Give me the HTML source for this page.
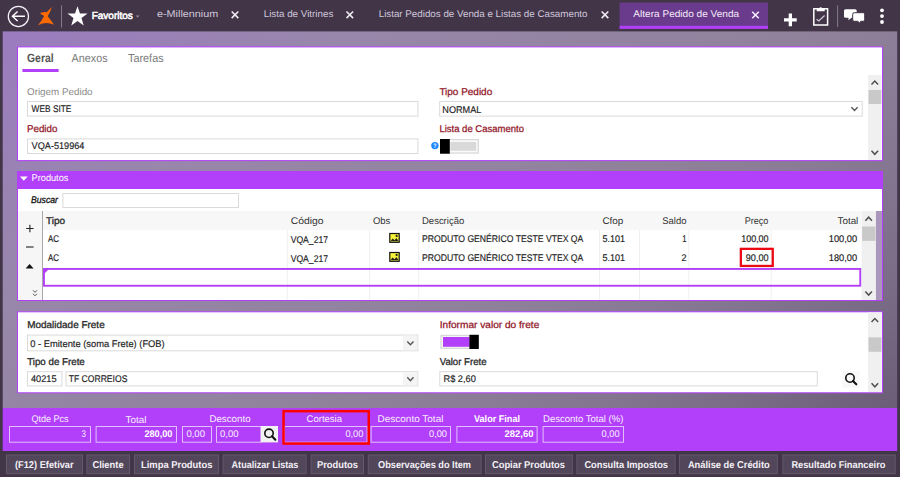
<!DOCTYPE html>
<html lang="pt-BR"><head><meta charset="utf-8"><title>Altera Pedido de Venda</title>
<style>
html,body{margin:0;padding:0;background:#423548;overflow:hidden}
svg{display:block;font-family:"Liberation Sans", sans-serif;text-rendering:geometricPrecision}
</style></head><body>
<svg width="900" height="477" viewBox="0 0 900 477">
<defs><linearGradient id="bg" gradientUnits="userSpaceOnUse" x1="3" y1="31.5" x2="517.05" y2="699.8"><stop offset="0" stop-color="#9b7cc0"/><stop offset="0.257" stop-color="#9887aa"/><stop offset="0.34" stop-color="#9685a5"/><stop offset="0.5" stop-color="#9283a0"/><stop offset="0.6" stop-color="#8f8199"/><stop offset="0.68" stop-color="#8b7d97"/><stop offset="0.78" stop-color="#847590"/><stop offset="0.9" stop-color="#786984"/><stop offset="1" stop-color="#6c5d77"/></linearGradient></defs>
<rect x="0.00" y="0.00" width="900.00" height="477.00" fill="#423548" />
<rect x="2.70" y="31.40" width="894.50" height="376.60" fill="url(#bg)" />
<rect x="2.70" y="408.00" width="894.50" height="43.00" fill="#b240fb" />
<circle cx="18.4" cy="16.4" r="10.1" fill="none" stroke="#f4f1f6" stroke-width="1.25"/>
<path d="M12.2 16.2 H25 M17.6 11.4 L12.4 16.2 L17.6 21" fill="none" stroke="#fff" stroke-width="1.4" stroke-linejoin="miter"/>
<path d="M51.87 7.00 L50.00 12.00 L47.67 16.33 L50.67 20.00 L54.00 24.67 Q46.00 20.87 38.00 25.20 L41.33 20.67 L44.00 16.33 L43.00 15.00 L40.80 14.13 L40.53 12.67 L44.80 12.07 L46.67 12.13 Z" fill="#ff6a00" />
<line x1="61.50" y1="5.30" x2="61.50" y2="27.50" stroke="#857a8c" stroke-width="1" />
<polygon points="77.50,6.20 79.97,13.40 87.58,13.52 81.49,18.10 83.73,25.38 77.50,21.00 71.27,25.38 73.51,18.10 67.42,13.52 75.03,13.40" fill="#fff"/>
<text x="91.70" y="19" font-size="10.3" fill="#fff" textLength="41.10" lengthAdjust="spacingAndGlyphs" stroke="#fff" stroke-width="0.55">Favoritos</text>
<path d="M135.6 15.4 H139.6 L137.6 17.4 Z" fill="#9a8fa3" />
<text x="157.00" y="17" font-size="9.7" fill="#d0c7dc" textLength="61.30" lengthAdjust="spacingAndGlyphs">e-Millennium</text>
<path d="M231.70 11.50 L238.30 18.10 M238.30 11.50 L231.70 18.10" fill="none" stroke="#efecf2" stroke-width="1.6" />
<text x="263.70" y="17" font-size="9.7" fill="#d0c7dc" textLength="69.60" lengthAdjust="spacingAndGlyphs">Lista de Vitrines</text>
<path d="M346.50 11.50 L353.10 18.10 M353.10 11.50 L346.50 18.10" fill="none" stroke="#efecf2" stroke-width="1.6" />
<text x="378.70" y="17" font-size="9.7" fill="#d0c7dc" textLength="208.80" lengthAdjust="spacingAndGlyphs">Listar Pedidos de Venda e Listas de Casamento</text>
<path d="M601.70 11.50 L608.30 18.10 M608.30 11.50 L601.70 18.10" fill="none" stroke="#efecf2" stroke-width="1.6" />
<rect x="619.60" y="2.50" width="148.40" height="26.30" fill="#6a3a8c" />
<rect x="619.60" y="25.80" width="148.40" height="3.00" fill="#b240fb" />
<text x="633.30" y="17" font-size="9.7" fill="#f3ecfa" textLength="105.90" lengthAdjust="spacingAndGlyphs">Altera Pedido de Venda</text>
<path d="M752.20 11.70 L758.80 18.30 M758.80 11.70 L752.20 18.30" fill="none" stroke="#f3ecfa" stroke-width="1.6" />
<path d="M784 19.9 H796.7 M790.35 13.6 V26.2" fill="none" stroke="#fff" stroke-width="3.3" />
<rect x="813.80" y="8.80" width="13.80" height="16.20" fill="none" stroke="#fff" stroke-width="1.5" />
<path d="M816.7 11.3 V8.2 H819.2 A1.6 1.6 0 0 1 822.2 8.2 H824.7 V11.3 Z" fill="#fff" />
<path d="M816.6 19.2 L818.8 21 L824.6 15.6" fill="none" stroke="#cfc8d6" stroke-width="1.3" />
<line x1="837.60" y1="5.30" x2="837.60" y2="27.00" stroke="#857a8c" stroke-width="1" />
<path d="M845.5 9.3 H855.2 A1.5 1.5 0 0 1 856.7 10.8 V16.2 A1.5 1.5 0 0 1 855.2 17.7 H851.5 L848.5 20.2 V17.7 H845.5 A1.5 1.5 0 0 1 844 16.2 V10.8 A1.5 1.5 0 0 1 845.5 9.3 Z" fill="#fff" />
<path d="M854.2 12.7 H863.2 A1.5 1.5 0 0 1 864.7 14.2 V19.8 A1.5 1.5 0 0 1 863.2 21.3 H860.6 V23.6 L857.6 21.3 H854.2 A1.5 1.5 0 0 1 852.7 19.8 V14.2 A1.5 1.5 0 0 1 854.2 12.7 Z" fill="#fff" stroke="#423548" stroke-width="1" />
<circle cx="882" cy="10.3" r="1.9" fill="#fff"/>
<circle cx="882" cy="16.1" r="1.9" fill="#fff"/>
<circle cx="882" cy="22" r="1.9" fill="#fff"/>
<rect x="17.50" y="46.90" width="865.00" height="113.70" fill="#fff" stroke="#b240fb" stroke-width="1" />
<text x="27.00" y="62" font-size="12" fill="#555" textLength="26.60" lengthAdjust="spacingAndGlyphs" font-weight="700">Geral</text>
<text x="71.60" y="62" font-size="11.6" fill="#7a7a7a" textLength="36.00" lengthAdjust="spacingAndGlyphs">Anexos</text>
<text x="128.00" y="62" font-size="11.6" fill="#7a7a7a" textLength="35.60" lengthAdjust="spacingAndGlyphs">Tarefas</text>
<rect x="22.40" y="69.00" width="36.20" height="3.00" fill="#b240fb" />
<rect x="868.00" y="75.00" width="13.60" height="85.00" fill="#f0f0f0" />
<rect x="868.50" y="90.00" width="12.80" height="14.00" fill="#c9c9c9" />
<path d="M871.50 84.60 L874.80 81.00 L878.10 84.60" fill="none" stroke="#505050" stroke-width="1.5" stroke-linecap="butt" stroke-linejoin="miter"/>
<path d="M871.50 150.70 L874.80 154.30 L878.10 150.70" fill="none" stroke="#505050" stroke-width="1.5" stroke-linecap="butt" stroke-linejoin="miter"/>
<text x="27.00" y="95" font-size="9.8" fill="#8a8a8a" textLength="65.60" lengthAdjust="spacingAndGlyphs">Origem Pedido</text>
<rect x="27.50" y="101.50" width="390.40" height="14.60" fill="#fff" stroke="#dadada" stroke-width="1" />
<text x="31.60" y="112" font-size="9.7" fill="#222" textLength="39.80" lengthAdjust="spacingAndGlyphs" stroke="#222" stroke-width="0.16">WEB SITE</text>
<text x="27.00" y="132" font-size="9.8" fill="#921528" textLength="30.40" lengthAdjust="spacingAndGlyphs" stroke="#921528" stroke-width="0.25">Pedido</text>
<rect x="27.50" y="138.90" width="390.40" height="14.60" fill="#fff" stroke="#dadada" stroke-width="1" />
<text x="31.60" y="149" font-size="9.7" fill="#222" textLength="52.80" lengthAdjust="spacingAndGlyphs" stroke="#222" stroke-width="0.16">VQA-519964</text>
<text x="439.40" y="95" font-size="9.8" fill="#921528" textLength="52.80" lengthAdjust="spacingAndGlyphs" stroke="#921528" stroke-width="0.25">Tipo Pedido</text>
<rect x="439.70" y="101.50" width="422.50" height="14.60" fill="#fff" stroke="#dadada" stroke-width="1" />
<text x="442.30" y="113" font-size="9.7" fill="#222" textLength="39.00" lengthAdjust="spacingAndGlyphs" stroke="#222" stroke-width="0.16">NORMAL</text>
<path d="M851.40 107.15 L854.50 110.45 L857.60 107.15" fill="none" stroke="#555" stroke-width="1.4" stroke-linecap="butt" stroke-linejoin="miter"/>
<text x="439.40" y="132" font-size="9.8" fill="#921528" textLength="84.60" lengthAdjust="spacingAndGlyphs" stroke="#921528" stroke-width="0.25">Lista de Casamento</text>
<circle cx="434.9" cy="145.6" r="3.7" fill="#1e88ff"/>
<text x="433.30" y="148" font-size="6.6" fill="#fff" textLength="3.20" lengthAdjust="spacingAndGlyphs" font-weight="700">?</text>
<rect x="440.65" y="139.65" width="37.60" height="13.40" fill="#fbfbfb" stroke="#d9d9d9" stroke-width="1.3" />
<rect x="450.30" y="141.90" width="25.90" height="8.90" fill="#d9d9d9" />
<rect x="440.00" y="139.00" width="9.80" height="14.70" fill="#000" />
<rect x="17.50" y="171.50" width="865.00" height="129.00" fill="#fff" stroke="#b240fb" stroke-width="1" />
<rect x="17.00" y="171.00" width="866.00" height="18.00" fill="#b240fb" />
<path d="M20 176.6 H27.6 L23.8 180.8 Z" fill="#fff" />
<text x="31.60" y="181" font-size="9.7" fill="#fff" textLength="36.80" lengthAdjust="spacingAndGlyphs">Produtos</text>
<text x="31.00" y="203" font-size="9.7" fill="#111" textLength="27.00" lengthAdjust="spacingAndGlyphs" font-style="italic" stroke="#111" stroke-width="0.3">Buscar</text>
<rect x="62.90" y="193.50" width="175.60" height="14.00" fill="#fff" stroke="#dadada" stroke-width="1" />
<rect x="18.00" y="211.00" width="24.00" height="89.00" fill="#f6f6f6" />
<rect x="43.00" y="211.00" width="818.00" height="19.00" fill="#f7f7f7" />
<line x1="42.50" y1="211.00" x2="42.50" y2="300.00" stroke="#a8a8a8" stroke-width="1" />
<line x1="287.30" y1="230.00" x2="287.30" y2="300.00" stroke="#efefef" stroke-width="1" />
<line x1="369.60" y1="230.00" x2="369.60" y2="300.00" stroke="#efefef" stroke-width="1" />
<line x1="418.70" y1="230.00" x2="418.70" y2="300.00" stroke="#efefef" stroke-width="1" />
<line x1="599.60" y1="230.00" x2="599.60" y2="300.00" stroke="#efefef" stroke-width="1" />
<line x1="639.50" y1="230.00" x2="639.50" y2="300.00" stroke="#efefef" stroke-width="1" />
<line x1="688.80" y1="230.00" x2="688.80" y2="300.00" stroke="#efefef" stroke-width="1" />
<line x1="771.20" y1="230.00" x2="771.20" y2="300.00" stroke="#efefef" stroke-width="1" />
<rect x="861.60" y="211.00" width="14.10" height="89.00" fill="#f0f0f0" />
<rect x="862.10" y="226.50" width="13.30" height="14.30" fill="#c9c9c9" />
<path d="M865.35 220.80 L868.65 217.20 L871.95 220.80" fill="none" stroke="#505050" stroke-width="1.5" stroke-linecap="butt" stroke-linejoin="miter"/>
<path d="M865.35 291.50 L868.65 295.10 L871.95 291.50" fill="none" stroke="#505050" stroke-width="1.5" stroke-linecap="butt" stroke-linejoin="miter"/>
<rect x="875.90" y="211.00" width="6.10" height="89.00" fill="#ab97bb" />
<text x="46.00" y="224" font-size="9.7" fill="#333" textLength="19.00" lengthAdjust="spacingAndGlyphs" stroke="#333" stroke-width="0.38">Tipo</text>
<text x="290.70" y="224" font-size="9.7" fill="#333" textLength="32.80" lengthAdjust="spacingAndGlyphs">Código</text>
<text x="373.00" y="224" font-size="9.7" fill="#333" textLength="17.30" lengthAdjust="spacingAndGlyphs">Obs</text>
<text x="422.00" y="224" font-size="9.7" fill="#333" textLength="42.20" lengthAdjust="spacingAndGlyphs">Descrição</text>
<text x="602.40" y="224" font-size="9.7" fill="#333" textLength="20.90" lengthAdjust="spacingAndGlyphs">Cfop</text>
<text x="662.30" y="224" font-size="9.7" fill="#333" textLength="24.20" lengthAdjust="spacingAndGlyphs">Saldo</text>
<text x="744.70" y="224" font-size="9.7" fill="#333" textLength="23.70" lengthAdjust="spacingAndGlyphs">Preço</text>
<text x="837.50" y="224" font-size="9.7" fill="#333" textLength="20.80" lengthAdjust="spacingAndGlyphs">Total</text>
<text x="48.00" y="242" font-size="9.7" fill="#222" textLength="11.00" lengthAdjust="spacingAndGlyphs" stroke="#222" stroke-width="0.16">AC</text>
<text x="290.70" y="243" font-size="9.7" fill="#222" textLength="37.30" lengthAdjust="spacingAndGlyphs" stroke="#222" stroke-width="0.16">VQA_217</text>
<rect x="389.80" y="233.50" width="9.40" height="8.80" fill="#f5f23c" stroke="#111" stroke-width="1.2" />
<path d="M390.40 241.30 L392.70 238.40 L394.50 240.30 L396.41 237.90 L398.60 241.30 Z" fill="#222" />
<circle cx="396.62" cy="235.90" r="1.1" fill="#222"/>
<text x="422.00" y="242" font-size="9.7" fill="#222" textLength="161.30" lengthAdjust="spacingAndGlyphs" stroke="#222" stroke-width="0.16">PRODUTO GENÉRICO TESTE VTEX QA</text>
<text x="602.40" y="242" font-size="9.7" fill="#222" textLength="22.60" lengthAdjust="spacingAndGlyphs" stroke="#222" stroke-width="0.16">5.101</text>
<text x="48.00" y="261" font-size="9.7" fill="#222" textLength="11.00" lengthAdjust="spacingAndGlyphs" stroke="#222" stroke-width="0.16">AC</text>
<text x="290.70" y="262" font-size="9.7" fill="#222" textLength="37.30" lengthAdjust="spacingAndGlyphs" stroke="#222" stroke-width="0.16">VQA_217</text>
<rect x="389.80" y="252.50" width="9.40" height="8.80" fill="#f5f23c" stroke="#111" stroke-width="1.2" />
<path d="M390.40 260.30 L392.70 257.40 L394.50 259.30 L396.41 256.90 L398.60 260.30 Z" fill="#222" />
<circle cx="396.62" cy="254.90" r="1.1" fill="#222"/>
<text x="422.00" y="261" font-size="9.7" fill="#222" textLength="161.30" lengthAdjust="spacingAndGlyphs" stroke="#222" stroke-width="0.16">PRODUTO GENÉRICO TESTE VTEX QA</text>
<text x="602.40" y="261" font-size="9.7" fill="#222" textLength="22.60" lengthAdjust="spacingAndGlyphs" stroke="#222" stroke-width="0.16">5.101</text>
<text x="682.20" y="242" font-size="9.7" fill="#222" textLength="4.30" lengthAdjust="spacingAndGlyphs" stroke="#222" stroke-width="0.16">1</text>
<text x="681.40" y="261" font-size="9.7" fill="#222" textLength="5.10" lengthAdjust="spacingAndGlyphs" stroke="#222" stroke-width="0.16">2</text>
<text x="741.20" y="242" font-size="9.7" fill="#222" textLength="27.40" lengthAdjust="spacingAndGlyphs" stroke="#222" stroke-width="0.16">100,00</text>
<text x="745.80" y="261" font-size="9.7" fill="#222" textLength="22.80" lengthAdjust="spacingAndGlyphs" stroke="#222" stroke-width="0.16">90,00</text>
<text x="828.80" y="242" font-size="9.7" fill="#222" textLength="28.30" lengthAdjust="spacingAndGlyphs" stroke="#222" stroke-width="0.16">100,00</text>
<text x="828.80" y="261" font-size="9.7" fill="#222" textLength="28.30" lengthAdjust="spacingAndGlyphs" stroke="#222" stroke-width="0.16">180,00</text>
<rect x="740.85" y="248.85" width="31.90" height="17.10" fill="none" stroke="#eb0a14" stroke-width="2.3" />
<rect x="43.95" y="268.95" width="816.30" height="16.80" fill="none" stroke="#b240fb" stroke-width="1.9" />
<path d="M43 268.4 H49.5 L43 274.9 Z" fill="#b240fb" />
<path d="M26.2 228.5 H33.6 M29.9 224.8 V232.2" fill="none" stroke="#222" stroke-width="1.1" />
<path d="M26 247 H33.6" fill="none" stroke="#222" stroke-width="1.1" />
<path d="M25.6 268.4 H33.6 L29.6 264 Z" fill="#111" />
<path d="M33.00 290.30 L35.00 292.30 L37.00 290.30" fill="none" stroke="#555" stroke-width="1" stroke-linecap="butt" stroke-linejoin="miter"/>
<path d="M33.00 293.80 L35.00 295.80 L37.00 293.80" fill="none" stroke="#555" stroke-width="1" stroke-linecap="butt" stroke-linejoin="miter"/>
<rect x="17.50" y="311.80" width="865.00" height="81.00" fill="#fff" stroke="#b240fb" stroke-width="1" />
<rect x="868.00" y="312.40" width="13.70" height="79.60" fill="#f0f0f0" />
<rect x="868.50" y="337.30" width="12.90" height="14.50" fill="#c9c9c9" />
<path d="M871.55 322.10 L874.85 318.50 L878.15 322.10" fill="none" stroke="#505050" stroke-width="1.5" stroke-linecap="butt" stroke-linejoin="miter"/>
<path d="M871.55 383.20 L874.85 386.80 L878.15 383.20" fill="none" stroke="#505050" stroke-width="1.5" stroke-linecap="butt" stroke-linejoin="miter"/>
<text x="27.20" y="328" font-size="9.8" fill="#2a2a2a" textLength="77.50" lengthAdjust="spacingAndGlyphs" stroke="#2a2a2a" stroke-width="0.3">Modalidade Frete</text>
<rect x="27.50" y="335.10" width="390.30" height="15.70" fill="#fff" stroke="#dadada" stroke-width="1" />
<rect x="403.00" y="335.60" width="14.30" height="14.70" fill="#f4f4f4" />
<text x="30.30" y="347" font-size="9.7" fill="#222" textLength="134.40" lengthAdjust="spacingAndGlyphs" stroke="#222" stroke-width="0.16">0 - Emitente (soma Frete) (FOB)</text>
<path d="M407.30 341.55 L410.40 344.85 L413.50 341.55" fill="none" stroke="#555" stroke-width="1.4" stroke-linecap="butt" stroke-linejoin="miter"/>
<text x="27.20" y="365" font-size="9.8" fill="#2a2a2a" textLength="57.60" lengthAdjust="spacingAndGlyphs" stroke="#2a2a2a" stroke-width="0.3">Tipo de Frete</text>
<rect x="27.50" y="371.70" width="34.40" height="14.20" fill="#fff" stroke="#dadada" stroke-width="1" />
<text x="31.00" y="382" font-size="9.7" fill="#222" textLength="25.50" lengthAdjust="spacingAndGlyphs" stroke="#222" stroke-width="0.16">40215</text>
<rect x="66.00" y="371.70" width="351.80" height="14.20" fill="#fff" stroke="#dadada" stroke-width="1" />
<rect x="403.00" y="372.20" width="14.30" height="13.20" fill="#f4f4f4" />
<text x="68.70" y="382" font-size="9.7" fill="#222" textLength="58.70" lengthAdjust="spacingAndGlyphs" stroke="#222" stroke-width="0.16">TF CORREIOS</text>
<path d="M407.30 377.35 L410.40 380.65 L413.50 377.35" fill="none" stroke="#555" stroke-width="1.4" stroke-linecap="butt" stroke-linejoin="miter"/>
<text x="439.70" y="328" font-size="9.8" fill="#921528" textLength="99.60" lengthAdjust="spacingAndGlyphs" stroke="#921528" stroke-width="0.25">Informar valor do frete</text>
<rect x="440.95" y="335.45" width="37.20" height="12.90" fill="#f6f8f4" stroke="#d9d9d9" stroke-width="1.3" />
<rect x="443.00" y="337.00" width="26.70" height="9.80" fill="#b240fb" />
<rect x="469.40" y="334.80" width="9.40" height="14.20" fill="#000" />
<text x="439.70" y="365" font-size="9.8" fill="#2a2a2a" textLength="46.80" lengthAdjust="spacingAndGlyphs" stroke="#2a2a2a" stroke-width="0.3">Valor Frete</text>
<rect x="439.80" y="371.70" width="377.50" height="14.20" fill="#fff" stroke="#dadada" stroke-width="1" />
<text x="443.50" y="382" font-size="9.7" fill="#222" textLength="32.30" lengthAdjust="spacingAndGlyphs" stroke="#222" stroke-width="0.16">R$ 2,60</text>
<rect x="842.30" y="371.00" width="17.40" height="16.60" fill="#f8f8f8" />
<circle cx="850.00" cy="378.00" r="4.2" fill="none" stroke="#111" stroke-width="1.6"/>
<line x1="852.97" y1="380.97" x2="856.27" y2="384.27" stroke="#111" stroke-width="2.1" stroke-linecap="round"/>
<text x="31.40" y="422" font-size="9.7" fill="#f8efff" textLength="37.20" lengthAdjust="spacingAndGlyphs">Qtde Pcs</text>
<rect x="9.50" y="426.50" width="81.00" height="15.70" fill="none" stroke="#e3bdfd" stroke-width="1" />
<text x="81.60" y="437" font-size="9.7" fill="#f8efff" textLength="4.40" lengthAdjust="spacingAndGlyphs">3</text>
<text x="125.60" y="423" font-size="9.7" fill="#f8efff" textLength="20.80" lengthAdjust="spacingAndGlyphs">Total</text>
<rect x="96.10" y="426.50" width="80.40" height="15.70" fill="none" stroke="#e3bdfd" stroke-width="1" />
<text x="144.40" y="437" font-size="9.7" fill="#fff" textLength="28.00" lengthAdjust="spacingAndGlyphs" font-weight="700">280,00</text>
<rect x="182.50" y="426.50" width="29.00" height="15.70" fill="none" stroke="#e3bdfd" stroke-width="1" />
<text x="186.40" y="437" font-size="9.7" fill="#f8efff" textLength="18.60" lengthAdjust="spacingAndGlyphs">0,00</text>
<text x="209.40" y="422" font-size="9.7" fill="#f8efff" textLength="41.20" lengthAdjust="spacingAndGlyphs">Desconto</text>
<rect x="216.50" y="426.50" width="44.50" height="15.70" fill="none" stroke="#e3bdfd" stroke-width="1" />
<text x="220.00" y="437" font-size="9.7" fill="#f8efff" textLength="18.40" lengthAdjust="spacingAndGlyphs">0,00</text>
<rect x="260.80" y="426.00" width="17.20" height="16.40" fill="#f2f2f2" />
<circle cx="269.00" cy="433.30" r="4.2" fill="none" stroke="#111" stroke-width="1.6"/>
<line x1="271.97" y1="436.27" x2="275.37" y2="439.67" stroke="#111" stroke-width="2.1" stroke-linecap="round"/>
<text x="306.60" y="422" font-size="9.7" fill="#f8efff" textLength="35.40" lengthAdjust="spacingAndGlyphs">Cortesia</text>
<rect x="284.50" y="426.50" width="82.60" height="15.70" fill="none" stroke="#e3bdfd" stroke-width="1" />
<text x="345.40" y="437" font-size="9.7" fill="#f8efff" textLength="18.00" lengthAdjust="spacingAndGlyphs">0,00</text>
<rect x="283.55" y="411.15" width="85.20" height="32.40" fill="none" stroke="#ff0000" stroke-width="2.5" />
<text x="377.60" y="422" font-size="9.7" fill="#f8efff" textLength="65.80" lengthAdjust="spacingAndGlyphs">Desconto Total</text>
<rect x="371.10" y="426.50" width="79.40" height="15.70" fill="none" stroke="#e3bdfd" stroke-width="1" />
<text x="429.00" y="437" font-size="9.7" fill="#f8efff" textLength="18.00" lengthAdjust="spacingAndGlyphs">0,00</text>
<text x="474.00" y="422" font-size="9.7" fill="#fff" textLength="46.00" lengthAdjust="spacingAndGlyphs" font-weight="700">Valor Final</text>
<rect x="456.90" y="426.50" width="80.20" height="15.70" fill="none" stroke="#e3bdfd" stroke-width="1" />
<text x="504.60" y="437" font-size="9.7" fill="#fff" textLength="28.80" lengthAdjust="spacingAndGlyphs" font-weight="700">282,60</text>
<text x="543.00" y="422" font-size="9.7" fill="#f8efff" textLength="80.40" lengthAdjust="spacingAndGlyphs">Desconto Total (%)</text>
<rect x="543.10" y="426.50" width="80.40" height="15.70" fill="none" stroke="#e3bdfd" stroke-width="1" />
<text x="601.60" y="437" font-size="9.7" fill="#f8efff" textLength="18.00" lengthAdjust="spacingAndGlyphs">0,00</text>
<rect x="6.50" y="455.00" width="76.00" height="18.70" fill="#51465a" stroke="#63586c" stroke-width="1" />
<text x="15.00" y="468" font-size="9.9" fill="#f4f1f6" textLength="58.60" lengthAdjust="spacingAndGlyphs" font-weight="700">(F12) Efetivar</text>
<rect x="86.90" y="455.00" width="42.60" height="18.70" fill="#51465a" stroke="#63586c" stroke-width="1" />
<text x="92.40" y="468" font-size="9.9" fill="#f4f1f6" textLength="31.20" lengthAdjust="spacingAndGlyphs" font-weight="700">Cliente</text>
<rect x="134.50" y="455.00" width="84.00" height="18.70" fill="#51465a" stroke="#63586c" stroke-width="1" />
<text x="141.00" y="468" font-size="9.9" fill="#f4f1f6" textLength="71.40" lengthAdjust="spacingAndGlyphs" font-weight="700">Limpa Produtos</text>
<rect x="223.10" y="455.00" width="83.00" height="18.70" fill="#51465a" stroke="#63586c" stroke-width="1" />
<text x="231.60" y="468" font-size="9.9" fill="#f4f1f6" textLength="66.80" lengthAdjust="spacingAndGlyphs" font-weight="700">Atualizar Listas</text>
<rect x="311.10" y="455.00" width="52.40" height="18.70" fill="#51465a" stroke="#63586c" stroke-width="1" />
<text x="317.00" y="468" font-size="9.9" fill="#f4f1f6" textLength="41.00" lengthAdjust="spacingAndGlyphs" font-weight="700">Produtos</text>
<rect x="368.30" y="455.00" width="112.80" height="18.70" fill="#51465a" stroke="#63586c" stroke-width="1" />
<text x="378.00" y="468" font-size="9.9" fill="#f4f1f6" textLength="93.00" lengthAdjust="spacingAndGlyphs" font-weight="700">Observações do Item</text>
<rect x="485.50" y="455.00" width="86.80" height="18.70" fill="#51465a" stroke="#63586c" stroke-width="1" />
<text x="492.00" y="468" font-size="9.9" fill="#f4f1f6" textLength="73.00" lengthAdjust="spacingAndGlyphs" font-weight="700">Copiar Produtos</text>
<rect x="576.90" y="455.00" width="98.20" height="18.70" fill="#51465a" stroke="#63586c" stroke-width="1" />
<text x="584.40" y="468" font-size="9.9" fill="#f4f1f6" textLength="83.60" lengthAdjust="spacingAndGlyphs" font-weight="700">Consulta Impostos</text>
<rect x="679.50" y="455.00" width="97.80" height="18.70" fill="#51465a" stroke="#63586c" stroke-width="1" />
<text x="687.90" y="468" font-size="9.9" fill="#f4f1f6" textLength="81.80" lengthAdjust="spacingAndGlyphs" font-weight="700">Análise de Crédito</text>
<rect x="782.90" y="455.00" width="112.30" height="18.70" fill="#51465a" stroke="#63586c" stroke-width="1" />
<text x="791.40" y="468" font-size="9.9" fill="#f4f1f6" textLength="94.00" lengthAdjust="spacingAndGlyphs" font-weight="700">Resultado Financeiro</text>
</svg>
</body></html>
